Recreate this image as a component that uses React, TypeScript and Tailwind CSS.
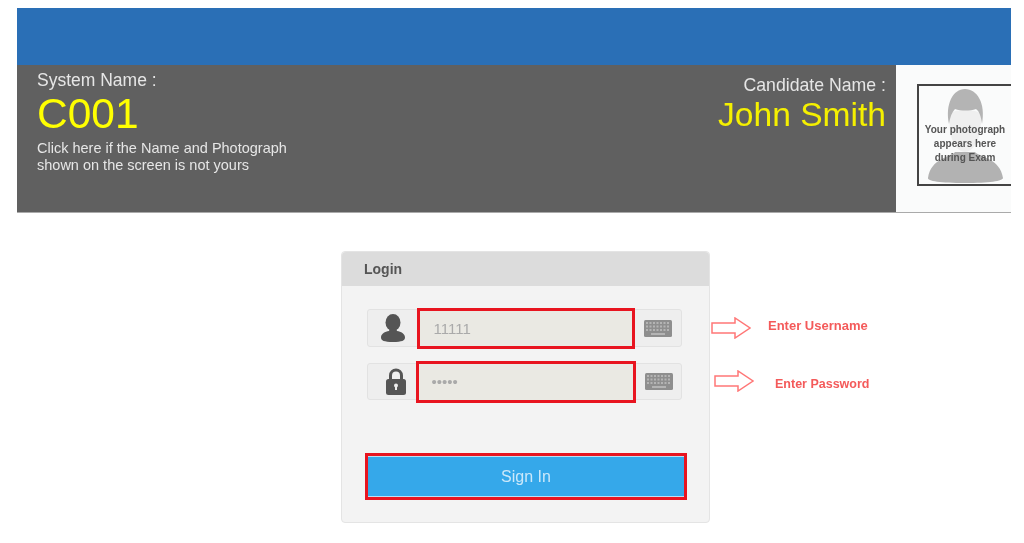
function UserIcon() {
  return (
    <svg width="26" height="28" viewBox="0 0 26 28" className="shrink-0">
      <ellipse cx="13" cy="8.500" rx="7.500" ry="8.500" fill="#555" />
      <path d="M10 14h6l1 3c4 .8 8 2.500 8 6.500 0 3-3 4.500-12 4.500S1 26.500 1 23.500c0-4 4-5.700 8-6.500z" fill="#555" />
    </svg>
  );
}

function LockIcon() {
  return (
    <svg width="22" height="27" viewBox="0 0 22 27" className="ml-2 shrink-0">
      <path d="M5.500 12V7.500a5.500 5.500 0 0 1 11 0V12" fill="none" stroke="#555" strokeWidth="3" />
      <rect x="1" y="11" width="20" height="16" rx="2.500" fill="#555" />
      <circle cx="11" cy="17.500" r="2" fill="#eee" />
      <rect x="10" y="18" width="2" height="4" fill="#eee" />
    </svg>
  );
}

function KeyboardIcon() {
  const rows = [3, 6.5, 10];
  const cols = [3, 6.5, 10, 13.5, 17, 20.5, 24];
  return (
    <svg width="28" height="17" viewBox="0 0 28 17" className="shrink-0">
      <rect width="28" height="17" rx="1.500" fill="#8e8e8e" />
      {rows.map((y) =>
        cols.map((x) => <rect key={`${x}-${y}`} x={x - 1} y={y - 1} width="2" height="2" fill="#b4b4b4" />)
      )}
      <rect x="7" y="13" width="14" height="2" fill="#b4b4b4" />
    </svg>
  );
}

function ArrowIcon() {
  return (
    <svg width="40" height="22" viewBox="0 0 40 22" className="shrink-0">
      <path d="M1 6h23V1l15 10-15 10v-5H1z" fill="#fff" stroke="#f77" strokeWidth="1.500" />
    </svg>
  );
}

function PhotoSilhouette() {
  return (
    <svg width="92" height="98" viewBox="0 0 92 98" className="absolute left-0 top-0">
      <path d="M30 30c0-8 32-8 33 0l-2 14c-1 12-8 22-15 22s-14-10-15-22z" fill="#efefef" />
      <path d="M30 38c-4-20 4-35 16-35s21 14 17 35c-1-8-3-13-6-15-6 2-15 2-21 0-3 3-5 8-6 15z" fill="#b4b4b4" />
      <path d="M36 66h20c4 5 25 6 28 26 0 3-14 5-38 5S8 95 9 92c3-20 23-21 27-26z" fill="#b2b2b2" />
    </svg>
  );
}

function InputRow({
  icon,
  value,
  password,
  iconWidth,
  inputClass,
  rowClass,
  keyWidth,
  arrowGap,
  labelClass,
  label,
}: {
  icon: React.ReactNode;
  value: string;
  password?: boolean;
  iconWidth: string;
  inputClass: string;
  rowClass: string;
  keyWidth: string;
  arrowGap: string;
  labelClass: string;
  label: string;
}) {
  return (
    <div className="flex items-center w-max">
      <div className={`flex items-center rounded-[3px] border border-[#e2e2e2] bg-[#eeeeee] ${rowClass}`}>
        <div className={`flex items-center justify-center ${iconWidth}`}>{icon}</div>
        <input
          readOnly
          type={password ? 'password' : 'text'}
          value={value}
          className={`shrink-0 border-[3px] border-[#e8141f] bg-[#eae9e3] text-[15px] text-[#aaaaaa] outline-none ${inputClass}`}
        />
        <div className={`flex items-center justify-center ${keyWidth}`}>
          <KeyboardIcon />
        </div>
      </div>
      <div className={arrowGap}>
        <ArrowIcon />
      </div>
      <span className={`font-bold text-[#f45a5a] ${labelClass}`}>{label}</span>
    </div>
  );
}

export default function App() {
  return (
    <div className="h-[543px] w-[1024px] overflow-hidden bg-white pt-2 font-['Liberation_Sans',Arial,sans-serif] blur-[0.6px]">
      {/* Top banner */}
      <div className="ml-[17px] h-[57px] w-[994px] bg-[#2a6fb6]" />
      <div className="ml-[17px] flex h-[148px] w-[994px] border-b border-[#aaaaaa]">
        <div className="flex flex-1 justify-between bg-[#606060] pl-5 pr-[10px] pt-[5px]">
          <div>
            <div className="text-[17.500px] leading-[20px] text-[#e6e6e6]">System Name :</div>
            <div className="text-[42.500px] leading-[48px] text-[#ffff00]">C001</div>
            <div className="mt-[2px] text-[14.500px] leading-[17px] text-[#e6e6e6]">
              Click here if the Name and Photograph
              <br />
              shown on the screen is not yours
            </div>
          </div>
          <div className="pt-[5px] text-right">
            <div className="text-[17.700px] leading-[20px] text-[#e6e6e6]">Candidate Name :</div>
            <div className="text-[33.600px] leading-[40px] text-[#f5f000]">John Smith</div>
          </div>
        </div>
        {/* Photo panel */}
        <div className="w-[115px] overflow-hidden bg-[#fafbfb] pl-[21px] pt-[19px]">
          <div className="relative h-[102px] w-[100px] border-2 border-[#444444]">
            <PhotoSilhouette />
            <div className="absolute left-0 top-[37px] w-[92px] text-center text-[10px] font-bold leading-[14px] text-[#555555]">
              Your photograph
              <br />
              appears here
              <br />
              during Exam
            </div>
          </div>
        </div>
      </div>

      {/* Login card */}
      <div className="ml-[341px] mt-[38px] h-[272px] w-[369px] rounded-[4px] border border-[#e4e4e4] bg-[#f3f3f3]">
        <div className="flex h-[34px] items-center rounded-t-[4px] bg-[#dcdcdc] pl-[22px] text-[14px] font-bold text-[#555555]">
          Login
        </div>
        <div className="pl-[25px] pt-[23px]">
          <InputRow
            icon={<UserIcon />}
            value="11111"
            iconWidth="w-[50px]"
            inputClass="h-[41px] w-[218px] pl-[13px]"
            rowClass="h-[38px] w-[315px]"
            keyWidth="w-[46px]"
            arrowGap="ml-[29px]"
            labelClass="ml-[17px] -translate-y-[2px] text-[13px]"
            label="Enter Username"
          />
          <div className="mt-[16px]">
            <InputRow
              password
              icon={<LockIcon />}
              value="11111"
              iconWidth="w-[49px]"
              inputClass="h-[42px] w-[220px] pl-[12px]"
              rowClass="h-[37px] w-[315px]"
              keyWidth="w-[45px]"
              arrowGap="ml-[32px] -translate-y-[1px]"
              labelClass="ml-[21px] translate-y-[3px] text-[12.500px]"
              label="Enter Password"
            />
          </div>
          <button className="-ml-[2px] mt-[53px] block h-[47px] w-[322px] border-[3px] border-[#e8141f] bg-[#35a8ea] text-center text-[16px] text-[#cbe8fa] shadow-[inset_0_1px_0_0_#b9dff5,inset_0_-1px_0_0_#b9dff5]">
            Sign In
          </button>
        </div>
      </div>
    </div>
  );
}
